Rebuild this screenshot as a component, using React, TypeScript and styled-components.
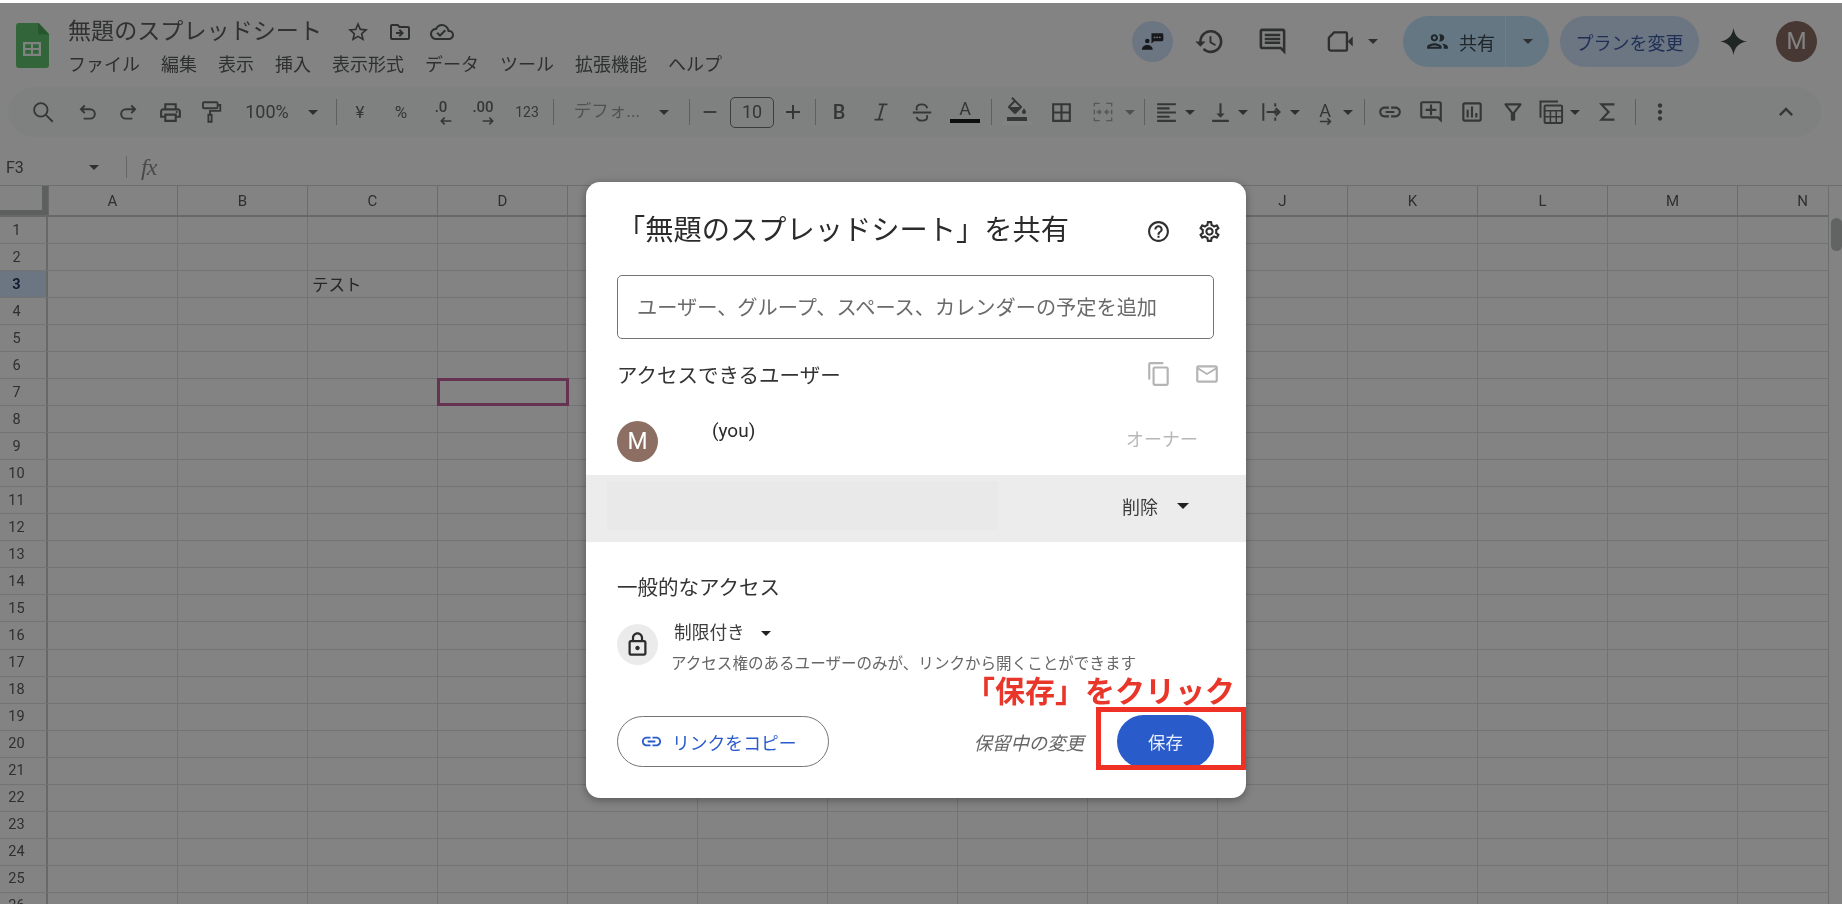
import React from "react";
import styled, { createGlobalStyle } from "styled-components";
import {
  MdOutlineLocalPrintshop, MdOutlineFormatColorFill, MdBorderAll, MdFormatAlignLeft, MdVerticalAlignBottom, MdLink, MdOutlineAddComment,
  MdOutlineInsertChart, MdOutlineFilterAlt, MdMoreVert, MdExpandLess, MdHistory, MdOutlineComment,
  MdOutlinePeople, MdOutlineHelpOutline, MdOutlineSettings, MdContentCopy, MdMailOutline,
  MdOutlineLock, MdOutlineStarBorder, MdOutlineDriveFileMove, MdOutlineCloudDone, MdRemove, MdAdd,
} from "react-icons/md";

const FONT = `Roboto, "Noto Sans CJK JP", sans-serif`;

const Global = createGlobalStyle`
  html, body { margin: 0; padding: 0; background: #fff; overflow: hidden; }
  body { font-family: ${FONT}; }
  * { box-sizing: border-box; }
`;

const Page = styled.div`
  position: relative; width: 1842px; height: 904px; overflow: hidden; padding-top: 3px;
  background: #fff; color: #4a4c4c; filter: blur(0.55px);
`;
const Scrim = styled.div`
  position: absolute; left: 0; right: 0; top: 3px; bottom: 0; background: rgba(0, 0, 0, 0.486);
`;

/* header */
const Header = styled.header`display: flex; height: 84px; padding-left: 16px; position: relative;`;
const LogoBox = styled.div`width: 33px; height: 45px; margin-top: 20px; flex: none;`;
const TitleCol = styled.div`margin-left: 19px; display: flex; flex-direction: column;`;
const TitleRow = styled.div`display: flex; align-items: center; height: 30px; margin-top: 14px;`;
const DocTitle = styled.div`font-size: 23.1px; line-height: 30px; color: #5f6060; width: 254px; white-space: nowrap; margin-right: 24px;`;
const TitleIcons = styled.div`display: flex; gap: 18px; color: #5a5c5c; font-size: 24px; svg { display: block; }`;
const Menu = styled.nav`display: flex; gap: 21px; margin-top: 5px; font-size: 18px; line-height: 26px; color: #5a5c5c;`;
const HeaderRight = styled.div`
  margin-left: auto; display: flex; align-items: flex-start; padding-top: 13px; padding-right: 25px; color: #5a5c5c;
`;
const Round = styled.div<{ $bg: string; $fg?: string; $ml?: number }>`
  width: 41px; height: 41px; margin-top: 5px; margin-left: ${p => p.$ml ?? 0}px; border-radius: 50%; background: ${p => p.$bg}; color: ${p => p.$fg ?? "#fff"};
  display: flex; align-items: center; justify-content: center; font-size: 23px; flex: none;
`;
const HeadIcon = styled.div<{ $ml: number }>`
  margin-left: ${p => p.$ml}px; height: 51px; display: flex; align-items: center; font-size: 31px; flex: none;
  svg { display: block; }
`;
const Caret = styled.span<{ $w?: number; $c?: string }>`
  display: inline-block; flex: none; width: 0; height: 0;
  border-left: ${p => (p.$w ?? 10) / 2}px solid transparent; border-right: ${p => (p.$w ?? 10) / 2}px solid transparent;
  border-top: ${p => (p.$w ?? 10) / 2}px solid ${p => p.$c ?? "#5a5c5c"};
`;
const SharePill = styled.div`
  margin-left: 25px; width: 146px; height: 51px; border-radius: 26px; background: #c2e7ff; color: #3f4a52;
  display: flex; align-items: center; flex: none; font-size: 18px;
`;
const ShareMain = styled.div`
  width: 103px; height: 100%; display: flex; align-items: center; padding-left: 22px; gap: 9px;
  border-right: 1px solid #e4f3fd; svg { font-size: 25px; flex: none; }
`;
const ShareCaret = styled.div`flex: 1; display: flex; justify-content: center;`;
const PlanPill = styled.div`
  margin-left: 11px; width: 139px; height: 51px; border-radius: 26px; background: #d3e3fd; color: #3f5ea5;
  display: flex; align-items: center; justify-content: center; font-size: 18px; flex: none;
`;

/* toolbar */
const Toolbar = styled.div`
  display: flex; align-items: center; height: 50px; margin: 0 21px 0 8px;
  border-radius: 25px; background: #f8fafa; color: #676969;
`;
const Slot = styled.div<{ $w: number; $ml: number }>`
  width: ${p => p.$w}px; margin-left: ${p => p.$ml}px; flex: none; height: 30px; position: relative;
  display: flex; align-items: center; justify-content: center; white-space: nowrap; line-height: 1;
  svg { display: block; flex: none; }
`;
const TText = styled.span<{ $s: number; $c?: string }>`
  font-size: ${p => p.$s}px; color: ${p => p.$c ?? "inherit"};
`;
const Divider = styled.div`width: 1px; height: 26px; background: #b8baba;`;
const SizeBox = styled.div`
  width: 44px; height: 31px; border: 1px solid #777; border-radius: 5px; display: flex; align-items: center; justify-content: center;
  font-size: 18px;
`;
const Dec = styled.div`
  position: relative; font-size: 15px; font-weight: 500; line-height: 14px; margin-top: -10px;
  svg { position: absolute; left: 50%; top: 13px; margin-left: -3px; }
`;
const ColorA = styled.div`
  width: 30px; display: flex; flex-direction: column; align-items: center; font-size: 18px; line-height: 20px; margin-top: -2px;
`;
const ColorBar = styled.div<{ $c: string }>`width: 30px; height: 4px; background: ${p => p.$c};`;
const RotateA = styled.div`
  position: relative; font-size: 18px; line-height: 18px; margin-top: -2px;
  svg { position: absolute; left: -1px; top: 12px; }
`;
const Muted = styled.span`opacity: 0.55; display: block;`;
const BoldB = styled.span`font-size: 20px; font-weight: 500;`;

/* formula */
const FormulaBar = styled.div`display: flex; align-items: center; height: 48px; padding: 12px 0 0 6px; color: #5a5c5c;`;
const NameBox = styled.div`width: 104px; display: flex; align-items: center; justify-content: space-between; font-size: 16px; padding-right: 11px;`;
const FDivider = styled.div`width: 1px; height: 22px; margin-left: 16px; background: #c4c6c6;`;
const Fx = styled.div`margin-left: 14px; font-family: "Liberation Serif", serif; font-style: italic; font-size: 24px; color: #8e9090; letter-spacing: -1px;`;

/* sheet */
const SheetWrap = styled.div`display: flex; border-top: 1px solid #d3d5d5;`;
const Sheet = styled.div`width: 1828px; overflow: hidden; flex: none;`;
const Row = styled.div<{ $h: number; $head?: boolean }>`
  display: flex; height: ${p => p.$h}px; border-bottom: ${p => (p.$head ? 2 : 1)}px solid ${p => (p.$head ? "#c9cbcb" : "#dfe1e1")};
`;
const Corner = styled.div`
  width: 48px; flex: none; background: #fdfffe; border-right: 6px solid #b8baba; border-bottom: 5px solid #b8baba; box-shadow: 1px 0 0 #c9cbcb;
`;
const ColHead = styled.div`
  width: 130px; flex: none; display: flex; align-items: center; justify-content: center; font-size: 15px; color: #5a5c5c;
  border-right: 1px solid #cfd1d1;
`;
const RowHead = styled.div<{ $on?: boolean }>`
  width: 48px; flex: none; border-right: 2px solid #c9cbcb; padding-right: 13px; display: flex; align-items: center; justify-content: center;
  font-size: 14.5px; color: ${p => (p.$on ? "#24375f" : "#5a5c5c")}; font-weight: ${p => (p.$on ? 700 : 400)};
  background: ${p => (p.$on ? "#d3e3fd" : "transparent")};
`;
const Cell = styled.div<{ $sel?: boolean }>`
  width: 130px; flex: none; border-right: 1px solid #dfe1e1; font-size: 16.5px; color: #4a4c4c; padding-left: 4px; display: flex; align-items: center;
  outline: ${p => (p.$sel ? "3px solid #c9609f" : "none")}; outline-offset: -2px; position: relative;
`;
const Track = styled.div`flex: 1; border-left: 1px solid #d3d5d5; position: relative;`;
const Thumb = styled.div`
  position: absolute; left: 2px; top: 32px; width: 11px; height: 33px; border-radius: 6px; background: #bfc1c1;
`;

/* modal */
const Modal = styled.section`
  position: absolute; left: 586px; top: 182px; width: 660px; height: 616px; background: #fff; border-radius: 14px;
  padding-top: 27px; box-shadow: 0 2px 8px rgba(0, 0, 0, 0.35); color: #2f2f2f;
`;
const ModalHead = styled.div`display: flex; align-items: center; height: 44px; padding-left: 31px;`;
const ModalTitle = styled.h2`margin: 0; font-size: 28.25px; font-weight: 400; line-height: 44px; white-space: nowrap; color: #2b2b2b;`;
const ModalIcons = styled.div`margin-left: auto; padding-right: 24px; display: flex; gap: 26px; font-size: 25px; svg { display: block; }`;
const Field = styled.div`
  margin: 22px 32px 0 31px; height: 64px; border: 1.5px solid #757575; border-radius: 5px; padding: 0 0 2px 19px; display: flex; align-items: center;
  font-size: 20.2px; color: #6a6a6a; white-space: nowrap;
`;
const SectionHead = styled.div`
  display: flex; align-items: center; margin-top: 16px; height: 40px; padding: 0 26px 2px 31px; font-size: 20.5px; color: #333;
`;
const FadedIcons = styled.div`margin-left: auto; display: flex; gap: 22px; color: #b4b4b4; font-size: 26px; svg { display: block; }`;
const OwnerRow = styled.div`display: flex; align-items: flex-start; height: 80px; padding: 26px 48px 0 31px;`;
const Avatar = styled.div`
  width: 41px; height: 41px; border-radius: 50%; background: #8d6e63; color: #fff; display: flex; align-items: center; justify-content: center; font-size: 23px; flex: none;
`;
const You = styled.div`margin-left: 54px; font-size: 19px; line-height: 20px; color: #2a2a2a;`;
const Owner = styled.div`margin-left: auto; margin-top: 6px; font-size: 18px; line-height: 26px; color: #b8b8b8;`;
const GrayRow = styled.div`display: flex; align-items: center; height: 67px; background: #ececec; padding-left: 21px;`;
const Redacted = styled.div`width: 391px; height: 49px; margin-top: -6px; background: #e9e9e9;`;
const Role = styled.div`display: flex; align-items: center; gap: 19px; margin: -5px 0 0 124px; font-size: 18px; color: #3c3c3c;`;
const GeneralTitle = styled.div`margin: 32px 0 0 31px; height: 30px; line-height: 28px; font-size: 20.5px; color: #333;`;
const AccessRow = styled.div`display: flex; align-items: flex-start; margin: 17px 0 0 31px;`;
const LockCircle = styled.div`
  width: 41px; height: 41px; margin-top: 3px; border-radius: 50%; background: #ebebeb; display: flex; align-items: center; justify-content: center;
  font-size: 27px; color: #2d2d2d; flex: none;
`;
const AccessText = styled.div`margin-left: 13px; display: flex; flex-direction: column;`;
const Limited = styled.div`display: flex; align-items: center; gap: 16px; margin-left: 3px; font-size: 17.7px; line-height: 24px; color: #3c3c3c;`;
const AccessDesc = styled.div`margin-top: 8px; font-size: 15.55px; line-height: 22px; color: #666; white-space: nowrap;`;
const Foot = styled.div`display: flex; align-items: center; height: 53px; margin-top: 40px; padding: 0 32px 0 31px;`;
const CopyLink = styled.div`
  width: 212px; height: 51px; border: 1px solid #757575; border-radius: 26px; display: flex; align-items: center; padding-left: 22px; gap: 9px;
  font-size: 17.8px; color: #2a5bcb; svg { font-size: 23px; flex: none; }
`;
const Pending = styled.div`margin-left: auto; font-size: 18.4px; font-style: italic; color: #666;`;
const SaveBtn = styled.div`
  margin-left: 33px; width: 97px; height: 53px; border-radius: 27px; background: #2a5bcb; color: #e8eefb;
  display: flex; align-items: center; justify-content: center; font-size: 17.5px;
`;
const RedBox = styled.div`
  position: absolute; left: 510px; top: 525px; width: 150px; height: 63px; border: 5px solid #ee3124;
`;
const RedLabel = styled.div`
  position: absolute; right: 11px; top: 489px; font-size: 30px; line-height: 42px; font-weight: 700; color: #e8372a; white-space: nowrap;
`;

const Stroke = ({ size = 26, w = 1.8, d, flip }: { size?: number; w?: number; d: string; flip?: boolean }) => (
  <svg width={size} height={size} viewBox="0 0 24 24" fill="none" stroke="currentColor" strokeWidth={w} style={flip ? { transform: "scaleX(-1)" } : undefined}>
    <path d={d} />
  </svg>
);
const UNDO = "M9 6L5.5 9.5 9 13M5.5 9.5H14a4.3 4.3 0 0 1 0 8.6H8";
const SEARCH = "M10 3.8a6.2 6.2 0 1 0 0 12.4 6.2 6.2 0 0 0 0-12.4zM14.6 14.6L21 21";
const PAINT = "M6.5 3h11.5a1 1 0 0 1 1 1v3.5a1 1 0 0 1-1 1H6.5a1 1 0 0 1-1-1V4a1 1 0 0 1 1-1zM19 5.500h2.500v5.500H12v3.500M10.500 14.500h3V21h-3z";
const ITALIC = "M10 5h8M6 19h8M14 5l-4 14";
const STRIKE = "M16.800 8.500C16.300 6.300 14.400 5 12 5c-2.700 0-5 1.300-5 3.600 0 .7.200 1.200.5 1.700M3.500 12.500h17M16.300 15c.3.500.5 1 .5 1.600 0 2.200-2.200 3.400-4.800 3.400-2.500 0-4.500-1.200-5-3.400";
const SIGMA = "M18 5H6l6.500 7L6 19h12";
const WRAP = "M4 4v16M15 4v3M15 10v4M15 17v3M7 12h12M15.500 8.500L19 12l-3.500 3.500";
const MERGE = "M9 4H4v3M4 17v3h5M15 4h5v3M20 17v3h-5M4 10v4M20 10v4M6 12h4M8 10l2 2-2 2M18 12h-4M16 10l-2 2 2 2";
const VIDEO = "M7 5h9.200a.8.8 0 0 1 .8.8v12.400a.8.8 0 0 1-.8.8H4.500A1.500 1.500 0 0 1 3 17.500V9z";

const CalcIcon = () => (
  <svg width="28" height="28" viewBox="0 0 24 24" fill="none" stroke="currentColor" strokeWidth="1.7">
    <path d="M3 17V3h15" /><rect x="6.500" y="6.500" width="15" height="15" rx="1" /><path d="M6.500 11h15M11.500 11v10.500M16.500 11v10.500M6.500 16h15" strokeWidth="1.300" />
  </svg>
);
const VideoIcon = () => (
  <svg width="31" height="31" viewBox="0 0 24 24" fill="none" stroke="currentColor" strokeWidth="1.800">
    <path d={VIDEO} /><path d="M17.500 12l4-3.800v7.600z" fill="currentColor" stroke="none" />
  </svg>
);
const Sheets = () => (
  <svg viewBox="0 0 33 45" width="33" height="45">
    <path d="M3 0h20l10 11v31a3 3 0 0 1-3 3H3a3 3 0 0 1-3-3V3a3 3 0 0 1 3-3z" fill="#62c672" />
    <path d="M22 0l11 11.500H24a2 2 0 0 1-2-2z" fill="#4aa55a" />
    <path d="M7 19h18v14H7z M9.300 21.300v3.700h5.700v-3.700z M17 21.300v3.700h5.700v-3.700z M9.300 27v3.700h5.700V27z M17 27v3.700h5.700V27z" fill="#f6fff8" fillRule="evenodd" />
  </svg>
);
const PersonChat = () => (
  <svg width="25" height="25" viewBox="0 0 24 24" fill="#2e3038">
    <circle cx="7" cy="11.500" r="2.200" /><path d="M1.800 20c0-3 2.400-4.600 5.200-4.600s5.200 1.600 5.200 4.600z" />
    <path d="M11 4h10a1.400 1.400 0 0 1 1.400 1.400v5A1.400 1.400 0 0 1 21 11.800h-7.500L11 14z" />
    <circle cx="14" cy="8" r=".9" fill="#d3e3fd" /><circle cx="16.500" cy="8" r=".9" fill="#d3e3fd" /><circle cx="19" cy="8" r=".9" fill="#d3e3fd" />
  </svg>
);
const Gem = () => (
  <svg width="27" height="27" viewBox="0 0 24 24" fill="#3f4a46"><path d="M12 0c1 7 5 11 12 12-7 1-11 5-12 12-1-7-5-11-12-12 7-1 11-5 12-12z" /></svg>
);

const ic = (node: React.ReactNode, c: number, w = 28) => ({ node, c, w });
const tool = [
  ic(<Stroke d={SEARCH} w={1.7} />, 43),
  ic(<Stroke d={UNDO} />, 88),
  ic(<Stroke d={UNDO} flip />, 128),
  ic(<MdOutlineLocalPrintshop size={25} />, 170),
  ic(<Stroke d={PAINT} w={1.7} />, 210),
  ic(<TText $s={18}>100%</TText>, 267, 50),
  ic(<Caret />, 313, 10),
  ic(<Divider />, 336, 1),
  ic(<TText $s={17}>¥</TText>, 360),
  ic(<TText $s={17}>%</TText>, 401),
  ic(<Dec>.0<Stroke size={16} w={2.500} d="M20 12H5M10 7l-5 5 5 5" /></Dec>, 441),
  ic(<Dec>.00<Stroke size={16} w={2.500} d="M4 12h15M14 7l5 5-5 5" /></Dec>, 483),
  ic(<TText $s={14}>123</TText>, 527),
  ic(<Divider />, 553, 1),
  ic(<TText $s={17.5} $c="#9c9e9e">デフォ...</TText>, 607, 68),
  ic(<Caret />, 664, 10),
  ic(<Divider />, 689, 1),
  ic(<MdRemove size={22} />, 710),
  ic(<SizeBox>10</SizeBox>, 752, 44),
  ic(<MdAdd size={24} />, 793),
  ic(<Divider />, 815, 1),
  ic(<BoldB>B</BoldB>, 839),
  ic(<Stroke d={ITALIC} w={1.700} />, 881),
  ic(<Stroke d={STRIKE} w={1.700} />, 922),
  ic(<ColorA>A<ColorBar $c="#1c1c1c" /></ColorA>, 965, 30),
  ic(<Divider />, 991, 1),
  ic(<ColorA><MdOutlineFormatColorFill size={24} /><ColorBar $c="#fff" /></ColorA>, 1017, 30),
  ic(<MdBorderAll size={25} />, 1061),
  ic(<Muted><Stroke d={MERGE} w={1.300} /></Muted>, 1103),
  ic(<Caret $c="#9a9c9c" />, 1130, 10),
  ic(<Divider />, 1144, 1),
  ic(<MdFormatAlignLeft size={25} />, 1166),
  ic(<Caret />, 1190, 10),
  ic(<MdVerticalAlignBottom size={25} />, 1220),
  ic(<Caret />, 1243, 10),
  ic(<Stroke d={WRAP} />, 1272),
  ic(<Caret />, 1295, 10),
  ic(<RotateA>A<Stroke size={15} w={2.400} d="M3 12h17M15 7l5 5-5 5" /></RotateA>, 1325),
  ic(<Caret />, 1348, 10),
  ic(<Divider />, 1364, 1),
  ic(<MdLink size={26} />, 1390),
  ic(<MdOutlineAddComment size={26} />, 1431),
  ic(<MdOutlineInsertChart size={26} />, 1472),
  ic(<MdOutlineFilterAlt size={26} />, 1513),
  ic(<CalcIcon />, 1551),
  ic(<Caret />, 1575, 10),
  ic(<Stroke d={SIGMA} w={2} />, 1608),
  ic(<Divider />, 1635, 1),
  ic(<MdMoreVert size={26} />, 1660),
  ic(<MdExpandLess size={28} />, 1786),
];
let right = 8;
const toolSlots = tool.map(t => {
  const ml = t.c - t.w / 2 - right;
  right = t.c + t.w / 2;
  return { ...t, ml };
});

const columns = "ABCDEFGHIJKLMN".split("");
const rows = Array.from({ length: 26 }, (_, i) => i + 1);
const menu = ["ファイル", "編集", "表示", "挿入", "表示形式", "データ", "ツール", "拡張機能", "ヘルプ"];

export default function App() {
  return (
    <Page>
      <Global />
      <Header>
        <LogoBox><Sheets /></LogoBox>
        <TitleCol>
          <TitleRow>
            <DocTitle>無題のスプレッドシート</DocTitle>
            <TitleIcons><MdOutlineStarBorder /><MdOutlineDriveFileMove /><MdOutlineCloudDone /></TitleIcons>
          </TitleRow>
          <Menu>{menu.map(m => <span key={m}>{m}</span>)}</Menu>
        </TitleCol>
        <HeaderRight>
          <Round $bg="#d3e3fd"><PersonChat /></Round>
          <HeadIcon $ml={21}><MdHistory /></HeadIcon>
          <HeadIcon $ml={32}><MdOutlineComment /></HeadIcon>
          <HeadIcon $ml={37}><VideoIcon /></HeadIcon>
          <HeadIcon $ml={12}><Caret /></HeadIcon>
          <SharePill>
            <ShareMain><MdOutlinePeople />共有</ShareMain>
            <ShareCaret><Caret /></ShareCaret>
          </SharePill>
          <PlanPill>プランを変更</PlanPill>
          <HeadIcon $ml={21}><Gem /></HeadIcon>
          <Round $bg="#8d6e63" $ml={29}>M</Round>
        </HeaderRight>
      </Header>

      <Toolbar>
        {toolSlots.map((t, i) => <Slot key={i} $w={t.w} $ml={t.ml}>{t.node}</Slot>)}
      </Toolbar>

      <FormulaBar>
        <NameBox>F3<Caret /></NameBox>
        <FDivider />
        <Fx>fx</Fx>
      </FormulaBar>

      <SheetWrap>
        <Sheet>
          <Row $h={31} $head>
            <Corner />
            {columns.map(c => <ColHead key={c}>{c}</ColHead>)}
          </Row>
          {rows.map(r => (
            <Row key={r} $h={27.04}>
              <RowHead $on={r === 3}>{r}</RowHead>
              {columns.map(c => (
                <Cell key={c} $sel={r === 7 && c === "D"}>{r === 3 && c === "C" ? "テスト" : null}</Cell>
              ))}
            </Row>
          ))}
        </Sheet>
        <Track><Thumb /></Track>
      </SheetWrap>

      <Scrim />

      <Modal>
        <ModalHead>
          <ModalTitle>「無題のスプレッドシート」を共有</ModalTitle>
          <ModalIcons><MdOutlineHelpOutline /><MdOutlineSettings /></ModalIcons>
        </ModalHead>
        <Field>ユーザー、グループ、スペース、カレンダーの予定を追加</Field>
        <SectionHead>
          アクセスできるユーザー
          <FadedIcons><MdContentCopy /><MdMailOutline /></FadedIcons>
        </SectionHead>
        <OwnerRow>
          <Avatar>M</Avatar>
          <You>(you)</You>
          <Owner>オーナー</Owner>
        </OwnerRow>
        <GrayRow>
          <Redacted />
          <Role>削除<Caret $w={13} $c="#222" /></Role>
        </GrayRow>
        <GeneralTitle>一般的なアクセス</GeneralTitle>
        <AccessRow>
          <LockCircle><MdOutlineLock /></LockCircle>
          <AccessText>
            <Limited>制限付き<Caret $w={10} $c="#222" /></Limited>
            <AccessDesc>アクセス権のあるユーザーのみが、リンクから開くことができます</AccessDesc>
          </AccessText>
        </AccessRow>
        <Foot>
          <CopyLink><MdLink />リンクをコピー</CopyLink>
          <Pending>保留中の変更</Pending>
          <SaveBtn>保存</SaveBtn>
        </Foot>
        <RedLabel>「保存」をクリック</RedLabel>
        <RedBox />
      </Modal>
    </Page>
  );
}
